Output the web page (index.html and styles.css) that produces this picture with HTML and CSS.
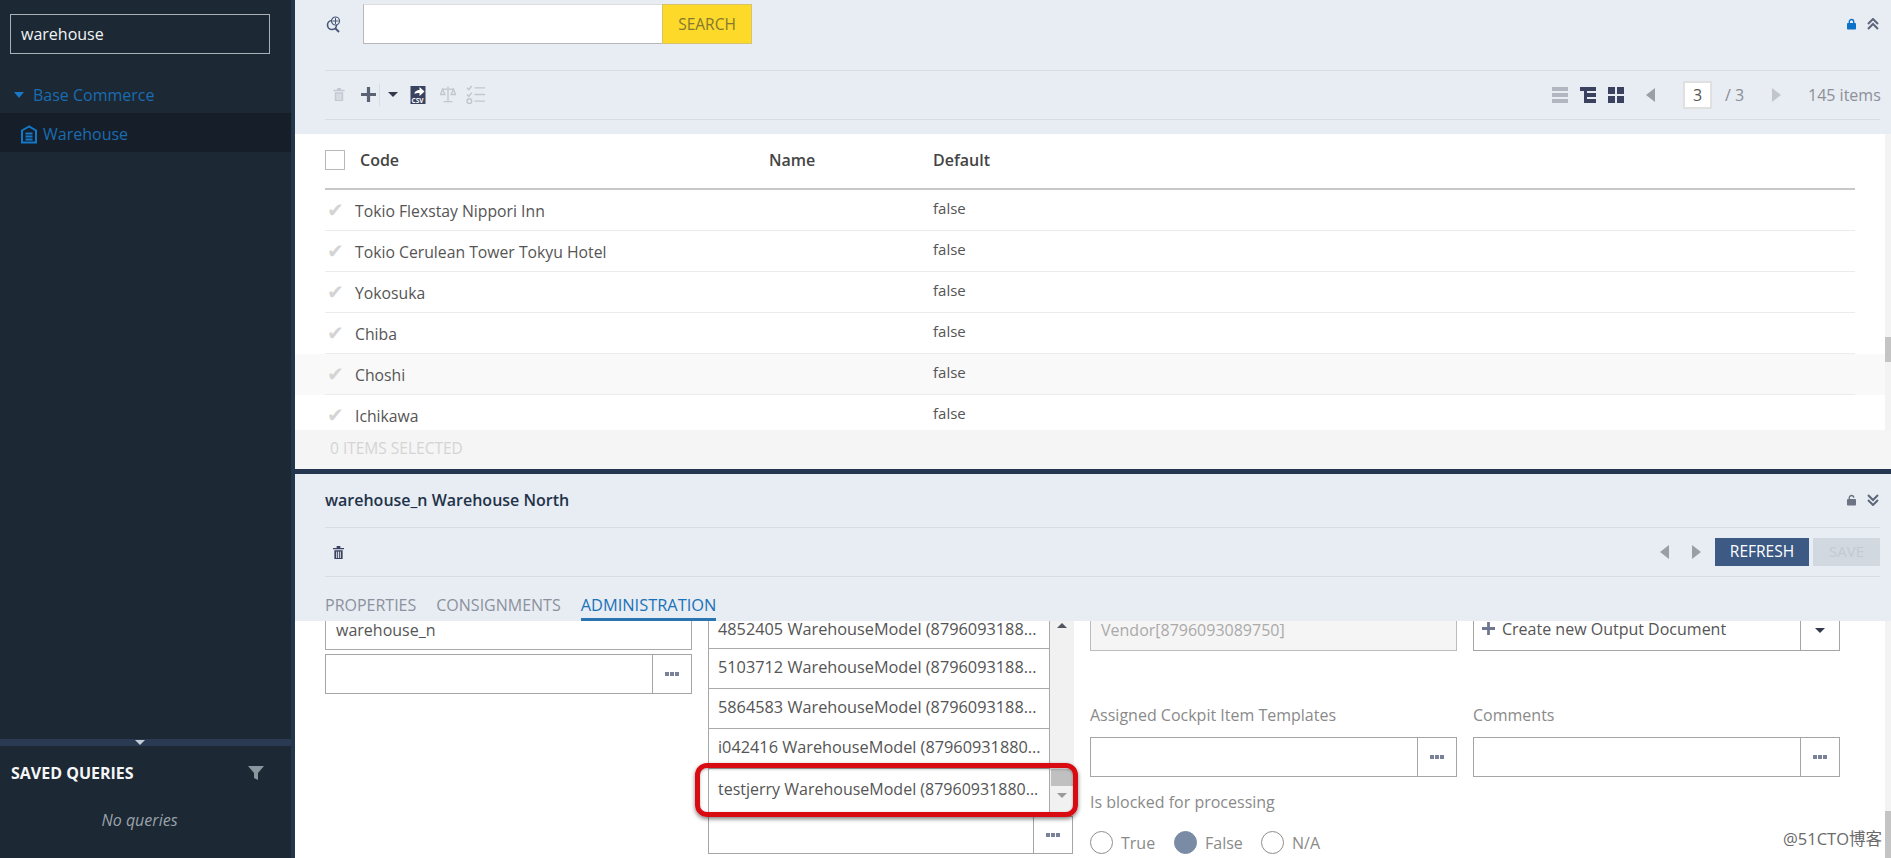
FILE: index.html
```html
<!DOCTYPE html>
<html lang="en">
<head>
<meta charset="utf-8">
<title>Warehouse</title>
<link rel="stylesheet" href="styles.css">
</head>
<body>
<div class="app">
  <aside class="sidebar">
    <div class="side-top">
      <div class="side-search">warehouse</div>
      <div class="tree-group"><span class="tri-down"></span>Base Commerce</div>
      <div class="tree-item">
        <svg class="wh-icon" viewBox="0 0 16 18"><path d="M8 1 1 5v12h14V5z" fill="none" stroke="#1478c8" stroke-width="2"/><path d="M4.500 7h7v2h-7zm0 3h7v2h-7zm0 3h7v2h-7z" fill="#1478c8"/></svg>
        <span>Warehouse</span>
      </div>
    </div>
    <div class="side-resize"><span class="tri-small"></span></div>
    <div class="saved-head">
      <span>SAVED QUERIES</span>
      <svg class="filter" viewBox="0 0 16 16"><path d="M0 1h16l-6 7v7l-4-2V8z" fill="#8b959e"/></svg>
    </div>
    <div class="no-queries">No queries</div>
  </aside>

  <main class="main">
    <section class="list-panel">
      <div class="bar-search">
        <svg class="search-ico" viewBox="0 0 16 18"><circle cx="7" cy="9" r="4.500" fill="none" stroke="#4a5878" stroke-width="1.600"/><path d="m10 12 4 4" stroke="#4a5878" stroke-width="2"/><circle cx="10.500" cy="5" r="4" fill="#e8ecf3" stroke="#4a5878" stroke-width="1.200"/><path d="M10.500 2v6M7.500 5h6" stroke="#4a5878"/></svg>
        <div class="search-input"></div>
        <div class="search-btn">SEARCH</div>
        <div class="spring"></div>
        <svg class="lock" viewBox="0 0 10 12"><path d="M2.500 5V3.500a2.500 2.500 0 0 1 5 0V5" fill="none" stroke="#0a72c8" stroke-width="1.500"/><rect y="5" width="10" height="7" rx="1" x="0" fill="#0a72c8"/></svg>
        <svg class="chev" viewBox="0 0 12 12"><path d="m1 6 5-5 5 5M1 11l5-5 5 5" fill="none" stroke="#5c6678" stroke-width="2"/></svg>
      </div>
      <div class="bar-tools">
        <svg class="t-trash" viewBox="0 0 12 14"><path d="M0 2h12v1.500H0zM4 0h4v2H4zM1.500 4.500h9V14h-9z" fill="#c3c8d1"/><path d="M4 6v7M6 6v7M8 6v7" stroke="#e8ecf3"/></svg>
        <svg class="t-plus" viewBox="0 0 14 14"><path d="M5.500 0h3v5.500H14v3H8.500V14h-3V8.500H0v-3h5.500z" fill="#5a6273"/></svg>
        <span class="t-sep"></span>
        <span class="tri-dark"></span>
        <svg class="t-csv" viewBox="0 0 15 18"><path d="M0 0h15v18H0z" fill="#39425f"/><path d="M4 8c0-3 3-4 5-4V1l5 4.500L9 10V7C7 7 5 7 4 8z" fill="#fff"/><text x="1" y="16.500" font-size="6.500" fill="#fff" font-family="Open Sans" font-weight="700">CSV</text></svg>
        <svg class="t-scale" viewBox="0 0 18 18"><path d="M9 0v16M4 17h10M2 3h14M3 3 .500 9h5zM15 3l-2.500 6h5z" fill="none" stroke="#c1c6cf" stroke-width="1.500"/></svg>
        <svg class="t-check" viewBox="0 0 20 20"><path d="m1 3 2 2 3-4M9 3h11M1 10l2 2 3-4M9 10h11M9 17h11" fill="none" stroke="#c1c6cf" stroke-width="1.500"/><circle cx="3.500" cy="17" r="2.500" fill="none" stroke="#c1c6cf" stroke-width="1.500"/></svg>
        <div class="spring"></div>
        <svg class="v-ico" viewBox="0 0 16 16"><path d="M0 0h16v4H0zM0 6h16v4H0zM0 12h16v4H0z" fill="#b1b6c1"/></svg>
        <svg class="v-ico v-gap" viewBox="0 0 16 16"><path d="M0 0h16v4H7v2h9v4H7v2h9v4H4V4H0z" fill="#3b4260"/></svg>
        <svg class="v-ico v-gap" viewBox="0 0 16 16"><path d="M0 0h7v7H0zM9 0h7v7H9zM0 9h7v7H0zM9 9h7v7H9z" fill="#3b4260"/></svg>
        <span class="arr-l first-arr"></span>
        <div class="page-box">3</div>
        <span class="page-of">/ 3</span>
        <span class="arr-r arr-pale"></span>
        <span class="items">145 items</span>
      </div>
      <div class="table">
        <div class="table-main">
          <div class="t-head">
            <span class="chk"></span>
            <span class="h-code">Code</span>
            <span class="h-name">Name</span>
            <span class="h-def">Default</span>
          </div>
          <div class="rows">
            <div class="row"><div class="row-in"><span class="tick">✔</span><span class="c-code">Tokio Flexstay Nippori Inn</span><span class="c-def">false</span></div></div>
            <div class="row"><div class="row-in"><span class="tick">✔</span><span class="c-code">Tokio Cerulean Tower Tokyu Hotel</span><span class="c-def">false</span></div></div>
            <div class="row"><div class="row-in"><span class="tick">✔</span><span class="c-code">Yokosuka</span><span class="c-def">false</span></div></div>
            <div class="row"><div class="row-in"><span class="tick">✔</span><span class="c-code">Chiba</span><span class="c-def">false</span></div></div>
            <div class="row row-alt"><div class="row-in"><span class="tick">✔</span><span class="c-code">Choshi</span><span class="c-def">false</span></div></div>
            <div class="row"><div class="row-in"><span class="tick">✔</span><span class="c-code">Ichikawa</span><span class="c-def">false</span></div></div>
          </div>
        </div>
        <div class="v-scroll"><span class="thumb-top"></span></div>
      </div>
      <div class="status">0 ITEMS SELECTED</div>
    </section>

    <div class="splitter"><span class="split-tri"></span></div>

    <section class="detail">
      <div class="d-title">
        <span>warehouse_n Warehouse North</span>
        <div class="spring"></div>
        <svg class="lock" viewBox="0 0 10 12"><path d="M2.500 5V3.500a2.500 2.500 0 0 1 5 0" fill="none" stroke="#6c7484" stroke-width="1.500"/><rect y="5" width="10" height="7" rx="1" x="0" fill="#6c7484"/></svg>
        <svg class="chev" viewBox="0 0 12 12"><path d="m1 1 5 5 5-5M1 6l5 5 5-5" fill="none" stroke="#5c6678" stroke-width="2"/></svg>
      </div>
      <div class="d-tools">
        <svg class="d-trash" viewBox="0 0 12 14"><path d="M0 2h12v1.500H0zM4 0h4v2H4zM1.500 4.500h9V14h-9z" fill="#39425f"/><path d="M4 6v7M6 6v7M8 6v7" stroke="#e8ecf3"/></svg>
        <div class="spring"></div>
        <span class="arr-l"></span>
        <span class="arr-r d-next"></span>
        <div class="btn-refresh">REFRESH</div>
        <div class="btn-save">SAVE</div>
      </div>
      <div class="tabs">
        <span class="tab">PROPERTIES</span>
        <span class="tab">CONSIGNMENTS</span>
        <span class="tab tab-on">ADMINISTRATION</span>
      </div>
      <div class="form-wrap">
        <div class="form">
          <div class="col">
            <div class="f-top">warehouse_n</div>
            <div class="f-btn f-second"><div class="f-in"></div><div class="dots"><span class="dots-in"></span></div></div>
          </div>
          <div class="col">
            <div class="list-box">
              <div class="list-items">
                <div class="li li-first">4852405 WarehouseModel (8796093188...</div>
                <div class="li">5103712 WarehouseModel (8796093188...</div>
                <div class="li">5864583 WarehouseModel (8796093188...</div>
                <div class="li">i042416 WarehouseModel (87960931880...</div>
                <div class="li li-last">testjerry WarehouseModel (87960931880...</div>
              </div>
              <div class="list-scroll">
                <span class="ls-up"></span>
                <span class="ls-thumb"></span>
                <span class="ls-down"></span>
              </div>
              <div class="callout"></div>
            </div>
            <div class="f-btn f-under"><div class="f-in"></div><div class="dots"><span class="dots-in"></span></div></div>
          </div>
          <div class="col">
            <div class="f-vendor">Vendor[8796093089750]</div>
            <div class="f-label l-first">Assigned Cockpit Item Templates</div>
            <div class="f-btn"><div class="f-in"></div><div class="dots"><span class="dots-in"></span></div></div>
            <div class="f-label l-second">Is blocked for processing</div>
            <div class="radios">
              <span class="radio"></span><span class="r-txt">True</span>
              <span class="radio radio-on"></span><span class="r-txt r-wide">False</span>
              <span class="radio"></span><span class="r-txt">N/A</span>
            </div>
          </div>
          <div class="col">
            <div class="f-create">
              <div class="f-create-in"><svg class="c-plus" viewBox="0 0 14 14"><path d="M5.500 0h3v5.500H14v3H8.500V14h-3V8.500H0v-3h5.500z" fill="#6f7890"/></svg>Create new Output Document</div>
              <div class="c-drop"><span class="tri-dark"></span></div>
            </div>
            <div class="f-label l-first">Comments</div>
            <div class="f-btn"><div class="f-in"></div><div class="dots"><span class="dots-in"></span></div></div>
          </div>
        </div>
        <div class="v-scroll"><span class="thumb-bottom"></span></div>
        <div class="watermark">@51CTO博客</div>
      </div>
    </section>
  </main>
</div>
</body>
</html>
```
FILE: styles.css
```css
* { box-sizing: border-box; }
html, body { margin: 0; height: 858px; overflow: hidden; }
body { font-family: "Open Sans", "Noto Sans CJK SC", sans-serif; font-size: 16px; color: #4a4a4a; background: #fff; }
.app { display: flex; height: 858px; }
.spring { flex: 1; }

/* sidebar */
.sidebar { width: 295px; flex: none; background: #1c2833; border-right: 4px solid #24364a; display: flex; flex-direction: column; color: #fff; }
.side-top { flex: 1; padding-top: 14px; }
.side-search { margin: 0 0 0 10px; width: 260px; height: 40px; border: 1px solid #a9b0b6; padding: 0 10px; line-height: 38px; color: #f2f4f6; font-size: 16px; }
.tree-group { margin-top: 23px; height: 36px; line-height: 36px; padding-left: 14px; color: #1a6cb2; font-size: 16px; display: flex; align-items: center; }
.tri-down { width: 0; height: 0; border-left: 5px solid transparent; border-right: 5px solid transparent; border-top: 6px solid #1a78c6; margin-right: 9px; }
.tree-item { height: 39px; background: #161f29; display: flex; align-items: center; padding: 2px 0 0 21px; color: #1a6cb2; font-size: 16px; }
.wh-icon { width: 16px; height: 19px; margin-right: 6px; margin-top: 1px; }
.side-resize { height: 7px; background: #2a3a52; display: flex; justify-content: center; }
.tri-small { width: 0; height: 0; border-left: 5px solid transparent; border-right: 5px solid transparent; border-top: 5px solid #c4ccd4; margin: 1px 12px 0 0; }
.saved-head { height: 52px; display: flex; align-items: center; justify-content: space-between; padding: 2px 27px 0 11px; font-size: 16px; font-weight: 700; color: #f4f6f8; flex: none; }
.filter { width: 16px; height: 18px; }
.no-queries { height: 60px; padding: 11px 12px 0 0; text-align: center; font-style: italic; font-size: 16px; color: #9aa3ab; flex: none; }

/* main */
.main { flex: 1; min-width: 0; display: flex; flex-direction: column; height: 858px; overflow: hidden; }
.list-panel { height: 469px; flex: none; display: flex; flex-direction: column; }
.bar-search { height: 70px; flex: none; background: #e8ecf3; padding: 4px 11px 26px 30px; display: flex; align-items: center; }
.search-ico { width: 16px; height: 18px; margin-right: 22px; margin-top: 1px; }
.search-input { width: 299px; height: 40px; background: #fff; border: 1px solid #b4b7bb; border-right: 0; border-top-color: #ddd; }
.search-btn { width: 90px; height: 40px; background: #fdd92a; border: 1px solid #d8c26a; color: #86782f; line-height: 38px; text-align: center; font-size: 15.5px; }
.lock { width: 9px; height: 12px; margin-right: 11px; }
.chev { width: 12px; height: 12px; margin-right: 1px; }
.bar-tools { height: 64px; flex: none; padding: 0 11px 15px 0; display: flex; align-items: center; background-color: #e8ecf3; background-image: linear-gradient(#d7dde7, #d7dde7), linear-gradient(#d7dde7, #d7dde7); background-repeat: no-repeat; background-size: 1555px 1px, 1555px 1px; background-position: 30px 0, 30px 49px; }
.t-trash { width: 12px; height: 13px; margin-left: 38px; margin-right: 16px; }
.t-plus { width: 15px; height: 15px; margin-right: 3px; }
.t-sep { width: 1px; height: 22px; background: #d7dde7; margin-right: 8px; }
.tri-dark { width: 0; height: 0; border-left: 5px solid transparent; border-right: 5px solid transparent; border-top: 5px solid #33384a; display: inline-block; }
.t-csv { width: 16px; height: 18px; margin-left: 12px; margin-right: 14px; }
.t-scale { width: 16px; height: 17px; margin-right: 9px; }
.t-check { width: 21px; height: 19px; }
.v-ico { width: 16px; height: 16px; }
.v-gap { margin-left: 12px; }
.arr-l, .arr-r { width: 0; height: 0; border-top: 7px solid transparent; border-bottom: 7px solid transparent; display: inline-block; }
.arr-l { border-right: 9px solid #9a9ea6; }
.arr-r { border-left: 9px solid #9a9ea6; }
.arr-pale { border-left-color: #c2c5cc; }
.first-arr { margin-left: 22px; }
.page-box { width: 29px; height: 28px; margin-left: 28px; background: #fff; border: 2px solid #e0e0e0; text-align: center; line-height: 24px; color: #555; font-size: 16px; }
.page-of { margin-left: 13px; width: 47px; color: #8a8d94; font-size: 16px; }
.items { margin-left: 27px; width: 72px; white-space: nowrap; color: #8d9096; font-size: 16px; }
.table { flex: 1; min-height: 0; background: #fff; overflow: hidden; display: flex; }
.table-main { flex: 1; min-width: 0; }
.t-head { height: 56px; margin: 0 30px; border-bottom: 2px solid #c8c8c8; display: flex; align-items: center; font-weight: 600; color: #444; font-size: 16px; padding-bottom: 2px; }
.chk { width: 20px; height: 20px; border: 1px solid #b8b8b8; margin-right: 15px; flex: none; }
.h-code { width: 409px; }
.h-name { width: 164px; }
.row { height: 41px; }
.row-alt { background: #f9f9f9; }
.row-in { height: 41px; margin: 0 30px; border-bottom: 1px solid #ececec; display: flex; align-items: center; font-size: 15.75px; color: #555; }
.tick { width: 30px; color: #d4d4d4; font-size: 20px; line-height: 20px; padding-left: 2px; font-family: "DejaVu Sans", sans-serif; flex: none; white-space: nowrap; }
.c-code { width: 578px; flex: none; margin-top: 1px; }
.c-def { margin-top: -4px; font-size: 15px; }
.v-scroll { width: 6px; flex: none; background: #f3f3f3; display: flex; flex-direction: column; }
.thumb-top { height: 25px; margin-top: 203px; background: #c4c4c4; }
.thumb-bottom { height: 48px; margin-top: 190px; background: #c4c4c4; }
.status { height: 39px; flex: none; background: #f5f5f5; padding-left: 35px; line-height: 37px; color: #d4d4d4; font-size: 15.5px; }
.splitter { height: 5px; background: #24364f; flex: none; position: relative; }
.split-tri { position: absolute; left: -4px; top: -3px; width: 0; height: 0; border-top: 5px solid transparent; border-bottom: 5px solid transparent; border-right: 4px solid #6f8fb5; }

/* detail */
.detail { flex: 1; min-height: 0; display: flex; flex-direction: column; }
.d-title { height: 53px; flex: none; background: #e8ecf3; padding: 0 11px 2px 30px; display: flex; align-items: center; color: #1f3349; font-weight: 600; font-size: 16px; }
.d-tools { height: 50px; flex: none; padding: 0 11px 0 38px; display: flex; align-items: center; background-color: #e8ecf3; background-image: linear-gradient(#d7dde7, #d7dde7), linear-gradient(#d7dde7, #d7dde7); background-repeat: no-repeat; background-size: 1555px 1px, 1555px 1px; background-position: 30px 0, 30px 49px; }
.d-trash { width: 11px; height: 13px; }
.d-next { margin-left: 23px; }
.btn-refresh { width: 94px; height: 28px; margin-left: 14px; background: #3d5a85; color: #fff; text-align: center; line-height: 27px; font-size: 15.5px; }
.btn-save { width: 67px; height: 28px; margin-left: 4px; background: #d2d8e0; color: #c4cad2; text-align: center; line-height: 27px; font-size: 15px; }
.tabs { height: 44px; flex: none; background: #e8ecf3; padding: 0 0 0 30px; display: flex; gap: 20px; align-items: flex-end; font-size: 16px; }
.tab { height: 29px; line-height: 26px; color: #8b929c; }
.tab-on { color: #1a72b8; border-bottom: 3px solid #2a74b0; font-size: 16.4px; }
.form-wrap { flex: 1; min-height: 0; position: relative; background: #fff; display: flex; }
.form { flex: 1; min-width: 0; display: grid; grid-template-columns: 367px 366px 367px 367px; column-gap: 16px; padding-left: 30px; align-content: start; }
.f-top { height: 29px; border: 1px solid #a9a9a9; border-top: 0; padding-left: 10px; line-height: 19px; font-size: 16px; color: #555; }
.f-btn { display: flex; height: 40px; border: 1px solid #a5a5a5; }
.f-second { margin-top: 4px; }
.f-in { flex: 1; }
.dots { width: 39px; border-left: 1px solid #a5a5a5; display: flex; align-items: center; justify-content: center; }
.dots-in { width: 14px; height: 4px; background: repeating-linear-gradient(90deg, #7a8299 0 4px, transparent 4px 5px); }
.list-box { display: flex; position: relative; height: 195px; }
.list-items { width: 342px; flex: none; }
.li { height: 40px; border: 1px solid #a9a9a9; border-top: 0; padding-left: 9px; line-height: 37px; font-size: 16.3px; color: #555; white-space: nowrap; }
.li-first { height: 28px; line-height: 17px; }
.li-last { height: 47px; line-height: 41px; border-bottom: 0; font-size: 16px; }
.list-scroll { flex: 1; background: #f1f1f1; display: flex; flex-direction: column; align-items: center; }
.ls-up { width: 0; height: 0; border-left: 5px solid transparent; border-right: 5px solid transparent; border-bottom: 5px solid #50555e; margin-top: 2px; }
.ls-thumb { width: 23px; height: 17px; background: #c0c0c0; margin-top: 141px; }
.ls-down { width: 0; height: 0; border-left: 5px solid transparent; border-right: 5px solid transparent; border-top: 5px solid #9a9a9a; margin-top: 7px; }
.callout { position: absolute; left: -13px; top: 142px; width: 383px; height: 54px; border: 5.5px solid #d80a12; border-radius: 12px; box-shadow: 0 2px 4px rgba(0,0,0,.5), inset 0 1px 3px rgba(0,0,0,.3); }
.f-under { width: 365px; height: 38px; }
.f-vendor { height: 30px; background: #f5f5f5; border: 1px solid #bcbcbc; border-top: 0; padding-left: 10px; line-height: 19px; color: #aaa; font-size: 16px; }
.f-label { color: #8a8a8a; font-size: 16px; height: 21px; line-height: 21px; }
.l-first { margin-top: 54px; margin-bottom: 11px; }
.l-second { margin-top: 15px; }
.radios { display: flex; align-items: center; margin-top: 18px; font-size: 16px; color: #8a8a8a; }
.radio { width: 23px; height: 23px; border: 1px solid #8e8e8e; border-radius: 50%; margin-right: 8px; background: #fff; flex: none; }
.radio-on { background: #7a8ca5; border-color: #7a8ca5; }
.r-txt { width: 53px; }
.r-wide { width: 56px; }
.f-create { display: flex; height: 30px; border: 1px solid #a5a5a5; border-top: 0; }
.f-create-in { flex: 1; padding: 0 0 14px 8px; color: #555; font-size: 16px; display: flex; align-items: center; }
.c-plus { width: 13px; height: 13px; margin-right: 7px; }
.c-drop { width: 39px; border-left: 1px solid #a5a5a5; text-align: center; line-height: 12px; }
.watermark { position: absolute; right: 9px; bottom: 8px; color: #6a6a6a; font-size: 16.5px; text-shadow: 0 0 2px #fff; }
```
